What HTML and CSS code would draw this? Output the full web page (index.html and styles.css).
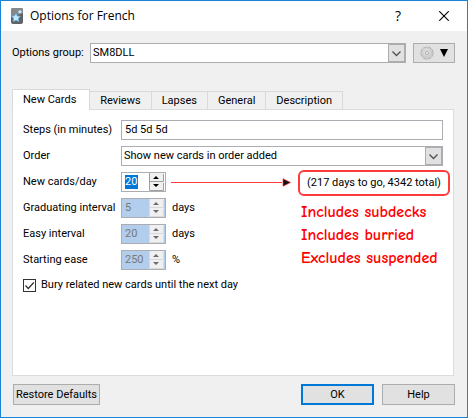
FILE: index.html
```html
<!DOCTYPE html>
<html lang="en">
<head>
<meta charset="utf-8">
<title>Options for French</title>
<link rel="stylesheet" href="styles.css">
</head>
<body>
<main class="window">
  <header class="titlebar">
    <svg class="app-icon" width="12" height="16" viewBox="0 0 12 16" aria-hidden="true">
      <rect width="12" height="16" rx="2" fill="#606264"/>
      <path d="M2 0h8a2 2 0 0 1 2 2v3L0 9V2a2 2 0 0 1 2-2z" fill="#85888a"/>
      <path d="M5 5.500l1.300 2.500 3 .3-2 2.200.6 3-2.900-1.200-2.800 1.300.4-3.200-1.800-2.200 2.900-.5z" fill="#c4e8ff" stroke="#5fb2e8" stroke-width=".8"/>
      <path d="M9 1.500l.7 1.300 1.500.2-1 1.200.2 1.500-1.400-.6-1.500.6.2-1.600-1-1.200 1.600-.2z" fill="#c5e6fb"/>
    </svg>
    <h1 class="title">Options for French</h1>
    <button class="caption-button help-caption" type="button" aria-label="What's this">?</button>
    <button class="caption-button" type="button" aria-label="Close">
      <svg width="10" height="10" viewBox="0 0 10 10"><path d="M.3.3l9.400 9.400M9.700.3L.3 9.700" stroke="#000" stroke-width="1.100"/></svg>
    </button>
  </header>

  <form class="content">
    <div class="group-row">
      <label for="group">Options group:</label>
      <span class="combo">
        <select id="group"><option>SM8DLL</option></select>
        <svg class="chevron" width="17" height="18" viewBox="0 0 17 18" aria-hidden="true"><rect x=".5" y=".5" width="16" height="17" fill="#e1e1e1" stroke="#adadad"/><path d="M4.500 7.500l4 4 4-4" fill="none" stroke="#505050" stroke-width="1.300"/></svg>
      </span>
      <button class="gear-button" type="button" aria-label="Manage options groups">
        <svg width="14" height="14" viewBox="0 0 14 14"><circle cx="7" cy="7" r="5.800" fill="#d2d2d2" stroke="#b4b4b4" stroke-width="1.600" stroke-dasharray="3.800 .755"/><circle cx="7" cy="7" r="5.600" fill="#cdcdcd"/><circle cx="6.500" cy="6" r="3.800" fill="#d8d8d8"/><circle cx="7" cy="7" r="1.600" fill="#e6e6e6" stroke="#aaa" stroke-width=".8"/></svg>
        <svg width="8" height="8" viewBox="0 0 8 8"><path d="M0 0h8L4 8z"/></svg>
      </button>
    </div>

    <div class="tabs" role="tablist">
      <button class="tab selected" type="button" role="tab" aria-selected="true">New Cards</button>
      <button class="tab" type="button" role="tab">Reviews</button>
      <button class="tab" type="button" role="tab">Lapses</button>
      <button class="tab" type="button" role="tab">General</button>
      <button class="tab" type="button" role="tab">Description</button>
    </div>

    <section class="panel" role="tabpanel">
      <div class="row">
        <label for="steps">Steps (in minutes)</label>
        <input class="textbox" id="steps" type="text" value="5d 5d 5d">
      </div>
      <div class="row">
        <label for="order">Order</label>
        <span class="combo">
          <select id="order"><option>Show new cards in order added</option></select>
          <svg class="chevron" width="17" height="18" viewBox="0 0 17 18" aria-hidden="true"><rect x=".5" y=".5" width="16" height="17" fill="#e1e1e1" stroke="#adadad"/><path d="M4.500 7.500l4 4 4-4" fill="none" stroke="#505050" stroke-width="1.300"/></svg>
        </span>
      </div>
      <div class="row">
        <label for="perday">New cards/day</label>
        <span class="spin active">
          <input id="perday" type="text" inputmode="numeric" value="20">
          <svg class="steppers" width="15" height="18" viewBox="0 0 15 18" aria-hidden="true"><path fill="#f0f0f0" d="M0 0h15v18H0z"/><path d="M.5 0v17.500M1 8.500h13.500V1M1 17.500h13.500V10" fill="none" stroke="#a0a0a0"/><path d="M4 6h6L7 3zM4 11h6l-3 3z"/></svg>
        </span>
        <span class="arrow" aria-hidden="true"><svg width="10" height="9" viewBox="0 0 10 9"><path d="M1 .7v7.600l7.500-3.800z" fill="#111" stroke="#f33" stroke-width=".7"/></svg></span>
        <span class="callout">(217 days to go, 4342 total)
          <span class="notes">Includes subdecks<br>Includes burried<br>Excludes suspended</span>
        </span>
      </div>
      <div class="row">
        <label for="graduating">Graduating interval</label>
        <span class="spin disabled">
          <input id="graduating" type="text" value="5" disabled>
          <svg class="steppers" width="15" height="18" viewBox="0 0 15 18" aria-hidden="true"><path fill="#f0f0f0" d="M0 0h15v18H0z"/><path d="M.5 0v17.500M1 8.500h13.500V1M1 17.500h13.500V10" fill="none" stroke="#d9d9d9"/><path d="M4 6h6L7 3zM4 11h6l-3 3z" fill="#6d6d6d"/></svg>
        </span>
        <span class="unit">days</span>
      </div>
      <div class="row">
        <label for="easy">Easy interval</label>
        <span class="spin disabled">
          <input id="easy" type="text" value="20" disabled>
          <svg class="steppers" width="15" height="18" viewBox="0 0 15 18" aria-hidden="true"><path fill="#f0f0f0" d="M0 0h15v18H0z"/><path d="M.5 0v17.500M1 8.500h13.500V1M1 17.500h13.500V10" fill="none" stroke="#d9d9d9"/><path d="M4 6h6L7 3zM4 11h6l-3 3z" fill="#6d6d6d"/></svg>
        </span>
        <span class="unit">days</span>
      </div>
      <div class="row">
        <label for="ease">Starting ease</label>
        <span class="spin disabled">
          <input id="ease" type="text" value="250" disabled>
          <svg class="steppers" width="15" height="18" viewBox="0 0 15 18" aria-hidden="true"><path fill="#f0f0f0" d="M0 0h15v18H0z"/><path d="M.5 0v17.500M1 8.500h13.500V1M1 17.500h13.500V10" fill="none" stroke="#d9d9d9"/><path d="M4 6h6L7 3zM4 11h6l-3 3z" fill="#6d6d6d"/></svg>
        </span>
        <span class="unit">%</span>
      </div>
      <label class="check-row">
        <span class="check"><input type="checkbox" checked><svg width="13" height="13" viewBox="0 0 13 13" aria-hidden="true"><path d="M2.500 6.500l2.800 3L10.800 3.500" fill="none" stroke="#333" stroke-width="1.300"/></svg></span>
        Bury related new cards until the next day
      </label>
    </section>

    <footer class="buttons">
      <button class="push restore" type="button">Restore Defaults</button>
      <button class="push primary" type="button">OK</button>
      <button class="push" type="button">Help</button>
    </footer>
  </form>
</main>
</body>
</html>
```
FILE: styles.css
```css
* {
  box-sizing: border-box;
}

body {
  margin: 0;
  font: 11px/18px Tahoma, Roboto, sans-serif;
  color: #000;
}

button,
input,
select {
  margin: 0;
  font: inherit;
  color: inherit;
  border-radius: 0;
}

svg {
  display: block;
  flex: none;
}

.window {
  display: flex;
  flex-direction: column;
  min-height: 100vh;
  border: 1px solid #1883d7;
  background: #f0f0f0;
}

.titlebar {
  display: flex;
  align-items: center;
  height: 30px;
  padding: 0 0 0 10px;
  background: #fff;
}

.title {
  flex: 1;
  margin: 0 0 0 7px;
  font: 12px/18px "Open Sans", sans-serif;
}

.caption-button {
  display: flex;
  align-items: center;
  justify-content: center;
  width: 46px;
  height: 28px;
  padding: 0;
  border: 0;
  background: none;
}

.help-caption {
  font: 14px/18px "Open Sans", sans-serif;
}

.content {
  display: flex;
  flex: 1;
  flex-direction: column;
  padding: 12px 12px 12px 11px;
}

.group-row {
  display: flex;
  gap: 7px;
}

.group-row > label {
  width: 71px;
  line-height: 20px;
  white-space: nowrap;
}

.combo {
  display: flex;
  flex: 1;
  height: 20px;
  border: 1px solid #abadb3;
  background: #fff;
}

.combo select {
  flex: 1;
  min-width: 0;
  padding: 0 2px;
  border: 0;
  outline: 0;
  appearance: none;
  background: none;
}

.gear-button {
  display: flex;
  align-items: center;
  justify-content: center;
  gap: 6px;
  width: 42px;
  height: 20px;
  padding: 0;
  border: 1px solid #adadad;
  background: #e1e1e1;
}

.tabs {
  display: flex;
  align-items: flex-end;
  margin-top: 26px;
}

.tab {
  height: 18px;
  padding: 0 10px;
  border: 1px solid #d9d9d9;
  border-width: 1px 1px 0 0;
  background: #f0f0f0;
}

.tab.selected {
  position: relative;
  z-index: 1;
  height: 21px;
  margin-bottom: -1px;
  padding: 0 13px 0 10px;
  border-left-width: 1px;
  background: #fff;
}

.panel {
  display: flex;
  flex: 1;
  flex-direction: column;
  gap: 6px;
  margin-right: 1px;
  padding: 10px;
  border: 1px solid #dcdcdc;
  background: #fff;
}

.row {
  display: flex;
  height: 20px;
}

.row > label {
  width: 98px;
  line-height: 20px;
  white-space: nowrap;
}

.textbox {
  flex: 1;
  min-width: 0;
  padding: 0 3px;
  border: 1px solid #abadb3;
  background: #fff;
}

.spin {
  display: flex;
  align-items: center;
  justify-content: space-between;
  width: 45px;
  padding: 0 1px 0 3px;
  border: 1px solid #abadb3;
  background: #fff;
}

.spin input {
  width: 22px;
  height: 14px;
  padding: 0;
  border: 0;
  background: none;
}

.spin.active input {
  width: 13px;
  background: #0078d7;
  color: #fff;
}

.spin.disabled {
  background: #b2ceec;
  color: #787878;
}

.unit {
  margin-left: 6px;
  line-height: 20px;
}

.arrow {
  display: flex;
  flex: 1;
  align-items: center;
  margin: 0 6px 0 5px;
}

.arrow::before {
  content: "";
  flex: 1;
  height: 1px;
  background: #ff3b3b;
}

.callout {
  position: relative;
  width: 152px;
  height: 26px;
  margin: -2px -7px -4px 0;
  padding: 2px 0 0 7px;
  border: 2px solid #ff3b3b;
  border-radius: 6px;
  line-height: 18px;
  white-space: nowrap;
}

.notes {
  position: absolute;
  top: 29px;
  left: 1px;
  font: bold 16px/23px "Comic Sans MS", "Comic Neue", Lato, sans-serif;
  color: #f00;
}

.check-row {
  display: flex;
  align-items: center;
  gap: 5px;
}

.check {
  display: grid;
}

.check > * {
  grid-area: 1 / 1;
}

.check input {
  width: 13px;
  height: 13px;
  border: 1px solid #333;
  appearance: none;
  background: #fff;
}

.check svg {
  z-index: 1;
  pointer-events: none;
}

.buttons {
  display: flex;
  gap: 8px;
  margin-top: 8px;
  padding-left: 1px;
}

.push {
  width: 73px;
  height: 21px;
  padding: 0;
  border: 1px solid #adadad;
  background: #e1e1e1;
}

.push.restore {
  width: 87px;
  margin-right: auto;
}

.push.primary {
  border: 2px solid #0078d7;
}
```
